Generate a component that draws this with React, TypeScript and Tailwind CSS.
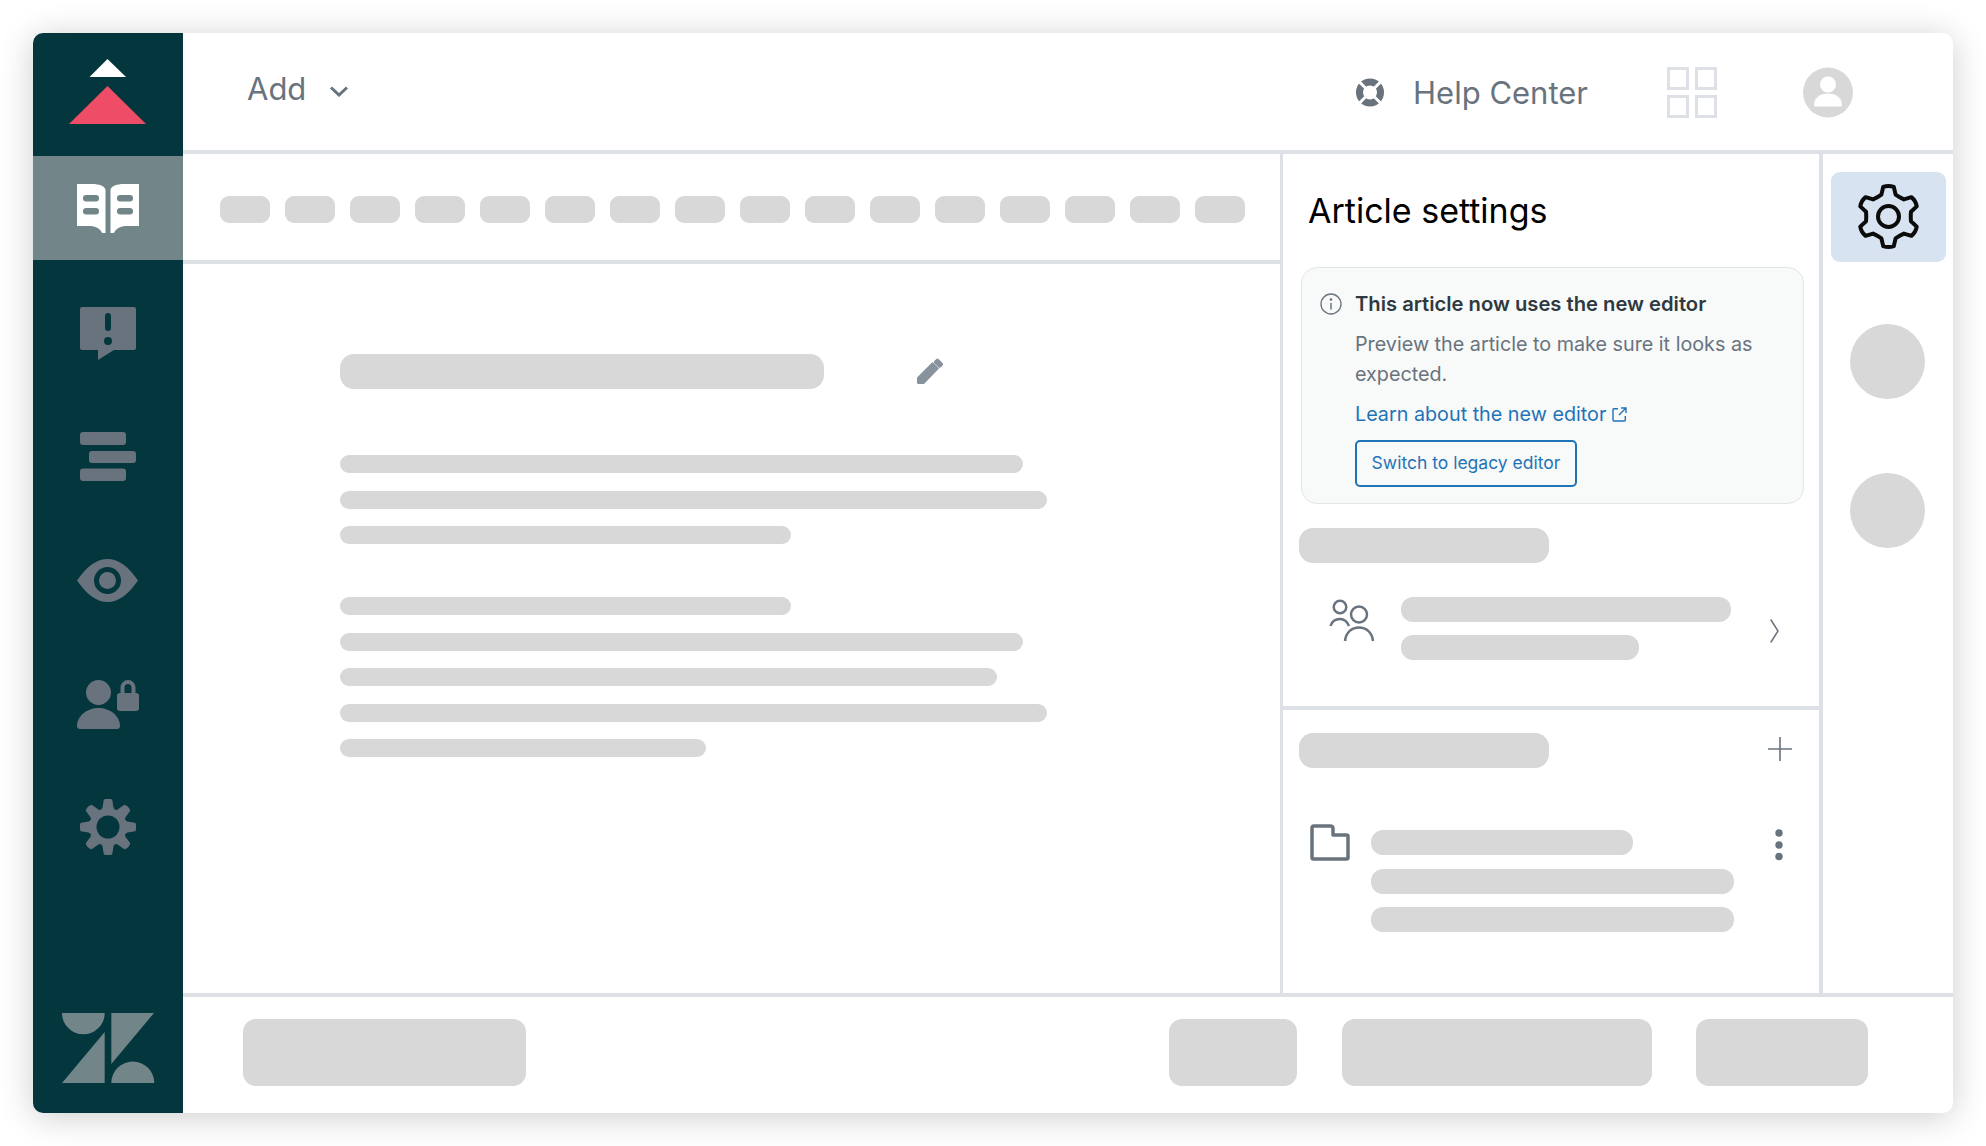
import React from "react";

const Sk = ({ c }: { c: string }) => <div className={"bg-[#d8d8d8] " + c} />;

function gearPath(cx: number, cy: number, rOut: number, rIn: number, teeth: number, dent: number) {
  const pt = (a: number, r: number) => `${(cx + Math.sin(a) * r).toFixed(2)} ${(cy - Math.cos(a) * r).toFixed(2)}`;
  const step = (Math.PI * 2) / teeth;
  let d = "";
  for (let i = 0; i < teeth; i++) {
    const a = i * step;
    const base = step * 0.3;
    const top = step * 0.17;
    d += (i === 0 ? "M" : "L") + pt(a - base, rIn);
    d += "L" + pt(a - top, rOut);
    d += "Q" + pt(a, rOut + 1.5) + " " + pt(a + top, rOut);
    d += "L" + pt(a + base, rIn);
    d += "Q" + pt(a + step / 2, rIn - dent) + " " + pt(a + step - base, rIn);
  }
  return d + "Z";
}

const Logo = () => (
  <svg width="77" height="65" viewBox="0 0 77 65">
    <path d="M20.500 18 L38.500 0 L57 18Z" fill="#fff" />
    <path d="M0 65 L38.500 27 L77 65Z" fill="#ef4d67" />
  </svg>
);

const Book = () => (
  <svg width="62" height="50" viewBox="0 0 62 50">
    <path d="M0 1 H15 C22 1 28 3 28.500 7 V50 H25 C24 47 20 43 13 43 H0Z" fill="#fff" />
    <path d="M62 1 H47 C40 1 34 3 33.500 7 V50 H37 C38 47 42 43 49 43 H62Z" fill="#fff" />
    <rect x="6" y="12" width="16" height="6.500" rx="3.200" fill="#728589" />
    <rect x="6" y="25" width="16" height="6.500" rx="3.200" fill="#728589" />
    <rect x="40" y="12" width="16" height="6.500" rx="3.200" fill="#728589" />
    <rect x="40" y="25" width="16" height="6.500" rx="3.200" fill="#728589" />
  </svg>
);

const Alert = () => (
  <svg width="56" height="53" viewBox="0 0 56 53">
    <path d="M2 0 H54 Q56 0 56 2 V41 Q56 43 54 43 H34 L18 53 V43 H2 Q0 43 0 41 V2 Q0 0 2 0Z" fill="#68737d" />
    <rect x="25" y="6" width="6" height="18" rx="3" fill="#03363d" />
    <circle cx="28" cy="34" r="4" fill="#03363d" />
  </svg>
);

const Bars = () => (
  <svg width="56" height="49" viewBox="0 0 56 49">
    <rect x="0" y="0" width="46" height="13" rx="3" fill="#68737d" />
    <rect x="9" y="19" width="47" height="12" rx="3" fill="#68737d" />
    <rect x="0" y="36.500" width="46" height="12.500" rx="3" fill="#68737d" />
  </svg>
);

const Eye = () => (
  <svg width="61" height="43" viewBox="0 0 61 43">
    <path d="M0 21.500 C10 7 20 0 30.500 0 C41 0 51 7 61 21.500 C51 36 41 43 30.500 43 C20 43 10 36 0 21.500Z" fill="#68737d" />
    <circle cx="30.500" cy="21.500" r="13.500" fill="#03363d" />
    <circle cx="30.500" cy="21.500" r="8.500" fill="#68737d" />
  </svg>
);

const UserLock = () => (
  <svg width="62" height="49" viewBox="0 0 62 49">
    <circle cx="21.500" cy="12.500" r="12.500" fill="#68737d" />
    <path d="M0 46 C0 36 10 28 21.500 28 C33 28 43 36 43 46 Q43 49 40 49 H3 Q0 49 0 46Z" fill="#68737d" />
    <rect x="40" y="13" width="22" height="18" rx="3" fill="#68737d" />
    <path d="M45.500 15 V7.500 a5.500 5.500 0 0 1 11 0 V15" fill="none" stroke="#68737d" strokeWidth="4" />
  </svg>
);

const SideGear = () => (
  <svg width="56" height="56" viewBox="0 0 56 56">
    <path d={gearPath(28, 28, 27, 20, 8, 4)} fill="#68737d" stroke="#68737d" strokeWidth="1.500" strokeLinejoin="round" />
    <circle cx="28" cy="28" r="11.500" fill="#03363d" />
  </svg>
);

const ZLogo = () => (
  <svg width="93" height="70" viewBox="0 0 93 70">
    <path d="M0 0 H42.700 A21.350 21.350 0 0 1 0 0Z" fill="#728589" />
    <path d="M42.700 19 V70 H0Z" fill="#728589" />
    <path d="M49.300 0 H92 L49.300 51Z" fill="#728589" />
    <path d="M49.300 70 A21.500 21.500 0 0 1 92.300 70Z" fill="#728589" />
  </svg>
);

const Life = () => (
  <svg width="28" height="29" viewBox="0 0 28 29">
    <circle cx="14" cy="14.500" r="14" fill="#68737d" />
    <circle cx="14" cy="14.500" r="7" fill="#fff" />
    <path d="M3 3.500 L25 25.500 M25 3.500 L3 25.500" stroke="#fff" strokeWidth="3" />
  </svg>
);

const Grid = () => (
  <svg width="50" height="51" viewBox="0 0 50 51" fill="none" stroke="#dde0e4" strokeWidth="3">
    <rect x="1.500" y="1.500" width="19" height="20" />
    <rect x="29.500" y="1.500" width="19" height="20" />
    <rect x="1.500" y="29.500" width="19" height="20" />
    <rect x="29.500" y="29.500" width="19" height="20" />
  </svg>
);

const Avatar = () => (
  <svg width="50" height="51" viewBox="0 0 50 51">
    <circle cx="25" cy="25.500" r="25" fill="#d8d8d8" />
    <circle cx="25" cy="17.500" r="8" fill="#fff" />
    <path d="M11 38 C11 31 17 26.500 25 26.500 C33 26.500 39 31 39 38 Q39 39.500 37.500 39.500 H12.500 Q11 39.500 11 38Z" fill="#fff" />
  </svg>
);

const Pencil = () => (
  <svg width="27" height="26" viewBox="0 0 27 26" fill="#87929d">
    <path d="M0 24.500 V19.500 L15.500 4 L22 10.500 L7 26 H1.500 Q0 26 0 24.500Z" />
    <rect x="17" y="2.200" width="9" height="6" rx="1.800" transform="rotate(45 21.500 5.200)" />
  </svg>
);

const Info = () => (
  <svg width="22" height="22" viewBox="0 0 22 22" fill="none" stroke="#68737d" strokeWidth="1.300">
    <circle cx="11" cy="11" r="10" />
    <path d="M11 10 V16.500" strokeWidth="1.500" />
    <circle cx="11" cy="6.500" r="0.700" fill="#68737d" />
  </svg>
);

const External = () => (
  <svg width="15" height="15" viewBox="0 0 15 15" fill="none" stroke="#1f73b7" strokeWidth="1.400">
    <path d="M6 1.700 H2 Q1 1.700 1 2.700 V13 Q1 14 2 14 H12.300 Q13.300 14 13.300 13 V9" />
    <path d="M9 1 H14 V6 M14 1 L7 8" />
  </svg>
);

const People = () => (
  <svg width="45" height="43" viewBox="0 0 45 43" fill="none" stroke="#68737d" strokeWidth="2.500">
    <circle cx="11" cy="8" r="6.300" />
    <path d="M1.500 27 C3 22 7 20 11 20 C15 20 18 22 20 27" />
    <circle cx="30" cy="15.500" r="8" />
    <path d="M16 42 C17 33 23 28.500 30 28.500 C37 28.500 43 33 44 42" />
  </svg>
);

const Chevron = () => (
  <svg width="9" height="24" viewBox="0 0 9 24" fill="none" stroke="#68737d" strokeWidth="1.500">
    <path d="M0.700 0.500 L8 12 L0.700 23.500" />
  </svg>
);

const Plus = () => (
  <svg width="24" height="24" viewBox="0 0 24 24" fill="none" stroke="#68737d" strokeWidth="1.600">
    <path d="M12 0 V24 M0 12 H24" />
  </svg>
);

const Folder = () => (
  <svg width="40" height="37" viewBox="0 0 40 37" fill="none" stroke="#68737d" strokeWidth="3.500" strokeLinejoin="round">
    <path d="M2 4 Q2 2 4 2 H20 Q23 2 23 4.500 V11 H36.500 Q38 11 38 12.500 V33.500 Q38 35 36.500 35 H3.500 Q2 35 2 33.500Z" />
  </svg>
);

const Dots = () => (
  <svg width="8" height="32" viewBox="0 0 8 32" fill="#68737d">
    <ellipse cx="4" cy="4" rx="3.700" ry="3.800" />
    <ellipse cx="4" cy="16" rx="3.700" ry="3.800" />
    <ellipse cx="4" cy="27.500" rx="3.700" ry="3.800" />
  </svg>
);

const BigGear = () => (
  <svg width="65" height="67" viewBox="0 0 65 67">
    <path d={gearPath(32.5, 33.5, 30, 23, 6, 1)} fill="none" stroke="#0b0b0b" strokeWidth="4" strokeLinejoin="round" />
    <circle cx="32.500" cy="33.500" r="10.500" fill="none" stroke="#0b0b0b" strokeWidth="4" />
  </svg>
);

export default function App() {
  const tools = Array.from({ length: 16 }, (_, i) => i);
  return (
    <div className="w-[1986px] h-[1146px] bg-white pt-[33px] pl-[33px] overflow-hidden font-['Inter',sans-serif]">
      <div className="w-[1920px] h-[1080px] flex rounded-[10px] overflow-hidden bg-white shadow-[0_4px_34px_rgba(0,0,0,0.2)]">
        {/* Sidebar */}
        <aside className="w-[150px] shrink-0 bg-[#03363d] flex flex-col items-stretch">
          <div className="h-[123px] flex items-start justify-center pt-[26px] pr-[1px]">
            <Logo />
          </div>
          <div className="h-[104px] bg-[#728589] flex items-center justify-center">
            <Book />
          </div>
          <div className="flex flex-col pt-[10px] pr-[1px]">
            <div className="h-[124px] flex items-center justify-center pt-[2px]"><Alert /></div>
            <div className="h-[124px] flex items-center justify-center"><Bars /></div>
            <div className="h-[124px] flex items-center justify-center"><Eye /></div>
            <div className="h-[124px] flex items-center justify-center"><UserLock /></div>
            <div className="h-[124px] flex items-center justify-center pb-[2px]"><SideGear /></div>
          </div>
          <div className="mt-auto pb-[30px] flex justify-center pl-[1px]">
            <ZLogo />
          </div>
        </aside>

        <div className="flex-1 flex flex-col min-w-0">
          {/* Header */}
          <header className="h-[121px] shrink-0 border-b-4 border-[#dde0e4] flex items-center pl-[64px] pr-[100px] text-[#68737d]">
            <div className="flex items-center gap-[24px] mb-[6px]">
              <span className="text-[31px] leading-none">Add</span>
              <svg width="18" height="11" viewBox="0 0 18 11" fill="none" stroke="#68737d" strokeWidth="3" className="mt-[6px]">
                <path d="M1 1.500 L9 9 L17 1.500" />
              </svg>
            </div>
            <div className="ml-auto flex items-center mt-[2px]">
              <Life />
              <span className="ml-[29px] text-[31px] leading-none">Help Center</span>
              <div className="ml-[79px]"><Grid /></div>
              <div className="ml-[86px]"><Avatar /></div>
            </div>
          </header>

          {/* Middle */}
          <div className="flex-1 flex min-h-0">
            <main className="w-[1097px] shrink-0 flex flex-col">
              <div className="h-[110px] shrink-0 border-b-4 border-[#dde0e4] flex items-start pt-[42px] pl-[37px] gap-[15px]">
                {tools.map((i) => (
                  <Sk key={i} c="w-[50px] h-[27px] rounded-[9px]" />
                ))}
              </div>
              <div className="pl-[157px] pt-[90px] flex flex-col">
                <div className="flex items-center">
                  <Sk c="w-[484px] h-[35px] rounded-[14px]" />
                  <div className="ml-[93px] mb-[2px]"><Pencil /></div>
                </div>
                <div className="mt-[66px] flex flex-col gap-[17.500px]">
                  <Sk c="w-[683px] h-[18px] rounded-[9px]" />
                  <Sk c="w-[707px] h-[18px] rounded-[9px]" />
                  <Sk c="w-[451px] h-[18px] rounded-[9px]" />
                </div>
                <div className="mt-[53px] flex flex-col gap-[17.500px]">
                  <Sk c="w-[451px] h-[18px] rounded-[9px]" />
                  <Sk c="w-[683px] h-[18px] rounded-[9px]" />
                  <Sk c="w-[657px] h-[18px] rounded-[9px]" />
                  <Sk c="w-[707px] h-[18px] rounded-[9px]" />
                  <Sk c="w-[366px] h-[18px] rounded-[9px]" />
                </div>
              </div>
            </main>

            {/* Settings */}
            <section className="w-[543px] shrink-0 border-l-[3px] border-r-4 border-[#dde0e4] flex flex-col">
              <div className="h-[556px] shrink-0 border-b-4 border-[#dde0e4] flex flex-col">
                <h2 className="pl-[25px] pt-[35px] text-[34px] leading-[44px] text-black font-normal">Article settings</h2>
                <div className="ml-[18px] mt-[34px] w-[503px] h-[237px] rounded-[16px] border border-[#e3e6e8] bg-[#f8f9f9] pl-[53px] pt-[21px] relative">
                  <div className="absolute left-[18px] top-[25px]"><Info /></div>
                  <div className="text-[20.200px] leading-[30px] font-semibold text-[#2f3941]">This article now uses the new editor</div>
                  <p className="mt-[10px] w-[430px] text-[19.750px] leading-[30px] text-[#68737d]">Preview the article to make sure it looks as expected.</p>
                  <a className="mt-[10px] flex items-center gap-[6px] text-[19.750px] leading-[30px] text-[#1f73b7]">
                    Learn about the new editor
                    <External />
                  </a>
                  <button className="mt-[11px] w-[222px] h-[47px] rounded-[5px] border-2 border-[#1f73b7] text-[17.500px] text-[#1f73b7] flex items-center justify-center">
                    Switch to legacy editor
                  </button>
                </div>
                <Sk c="ml-[16px] mt-[24px] w-[250px] h-[35px] rounded-[14px]" />
                <div className="mt-[34px] pl-[46px] flex items-start">
                  <div className="mt-[2px]"><People /></div>
                  <div className="ml-[27px] w-[330px] flex flex-col gap-[13px]">
                    <Sk c="w-[330px] h-[25px] rounded-[12px]" />
                    <Sk c="w-[238px] h-[25px] rounded-[12px]" />
                  </div>
                  <div className="ml-[39px] mt-[22px]"><Chevron /></div>
                </div>
              </div>
              <div className="flex-1 flex flex-col pt-[23px]">
                <div className="flex items-center justify-between pl-[16px] pr-[27px]">
                  <Sk c="w-[250px] h-[35px] rounded-[14px]" />
                  <div className="mb-[3px]"><Plus /></div>
                </div>
                <div className="mt-[56px] pl-[27px] flex items-start">
                  <Folder />
                  <div className="ml-[21px] mt-[6px] w-[363px] flex flex-col gap-[13.500px]">
                    <Sk c="w-[262px] h-[25px] rounded-[12px]" />
                    <Sk c="w-[363px] h-[25px] rounded-[12px]" />
                    <Sk c="w-[363px] h-[25px] rounded-[12px]" />
                  </div>
                  <div className="ml-[41px] mt-[5px]"><Dots /></div>
                </div>
              </div>
            </section>

            {/* Right rail */}
            <div className="flex-1 flex flex-col pt-[18px]">
              <div className="ml-[8px] w-[115px] h-[90px] rounded-[9px] bg-[#d8e3f1] flex items-center justify-center pb-[2px] pr-[1px]">
                <BigGear />
              </div>
              <Sk c="ml-[27px] mt-[62px] w-[75px] h-[75px] rounded-full" />
              <Sk c="ml-[27px] mt-[74px] w-[75px] h-[75px] rounded-full" />
            </div>
          </div>

          {/* Footer */}
          <footer className="h-[120px] shrink-0 border-t-4 border-[#dde0e4] flex items-start pt-[22px] pl-[60px] pr-[85px]">
            <Sk c="w-[283px] h-[67px] rounded-[13px]" />
            <div className="ml-auto flex">
              <Sk c="w-[128px] h-[67px] rounded-[13px] mr-[45px]" />
              <Sk c="w-[310px] h-[67px] rounded-[13px] mr-[44px]" />
              <Sk c="w-[172px] h-[67px] rounded-[13px]" />
            </div>
          </footer>
        </div>
      </div>
    </div>
  );
}
